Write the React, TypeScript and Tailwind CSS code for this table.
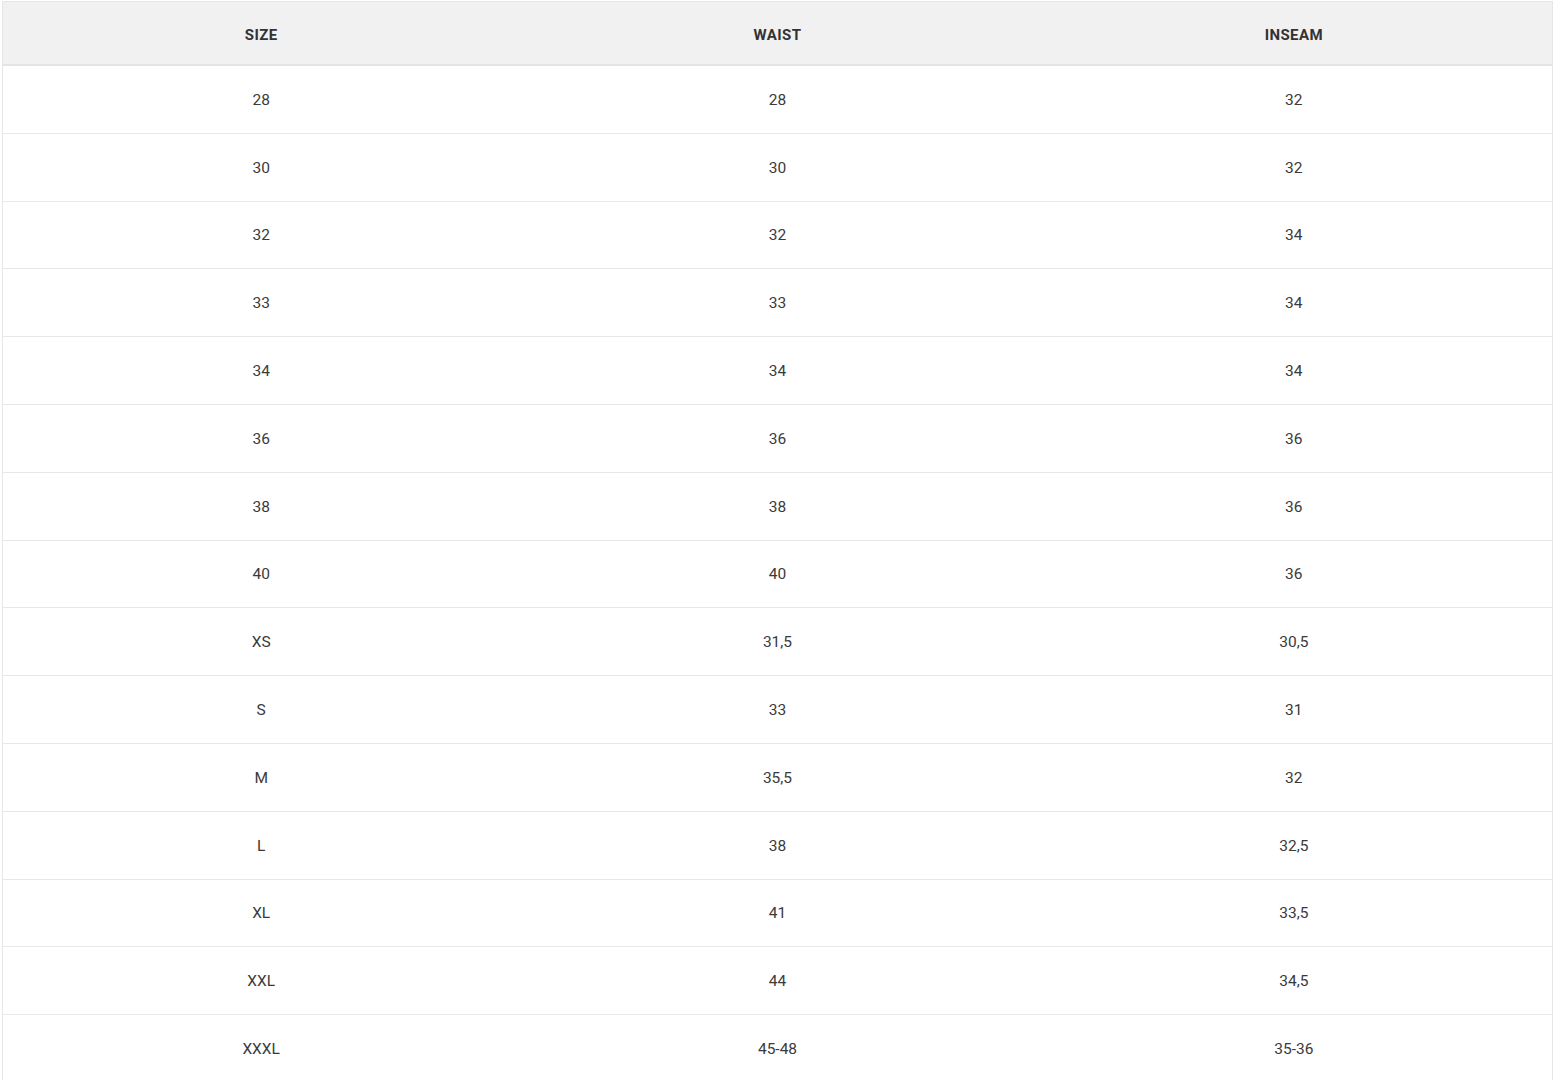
import React from "react";

const rows: [string, string, string][] = [
  ["28", "28", "32"],
  ["30", "30", "32"],
  ["32", "32", "34"],
  ["33", "33", "34"],
  ["34", "34", "34"],
  ["36", "36", "36"],
  ["38", "38", "36"],
  ["40", "40", "36"],
  ["XS", "31,5", "30,5"],
  ["S", "33", "31"],
  ["M", "35,5", "32"],
  ["L", "38", "32,5"],
  ["XL", "41", "33,5"],
  ["XXL", "44", "34,5"],
  ["XXXL", "45-48", "35-36"],
];

export default function App() {
  return (
    <div className="bg-white min-h-screen pl-[2px] pt-[1px] pr-[1px]" style={{ fontFamily: "Roboto, 'Liberation Sans', sans-serif" }}>
      <div className="border border-[#e6e6e6] border-b-0">
        <div className="grid grid-cols-3 h-[64px] pt-[4px] bg-[#f1f1f1] border-b-2 border-[#e4e4e4] items-center text-center">
          {["SIZE", "WAIST", "INSEAM"].map((h) => (
            <div key={h} className="text-[15px] font-bold tracking-[0.4px] text-[#333333]">{h}</div>
          ))}
        </div>
        {rows.map((r, i) => (
          <div key={i} className="grid grid-cols-3 h-[67.8px] pt-[2px] border-b border-[#e8e8e8] items-center text-center">
            {r.map((c, j) => (
              <div key={j} className="text-[15.5px] text-[#3a3a3a]">{c}</div>
            ))}
          </div>
        ))}
      </div>
    </div>
  );
}
